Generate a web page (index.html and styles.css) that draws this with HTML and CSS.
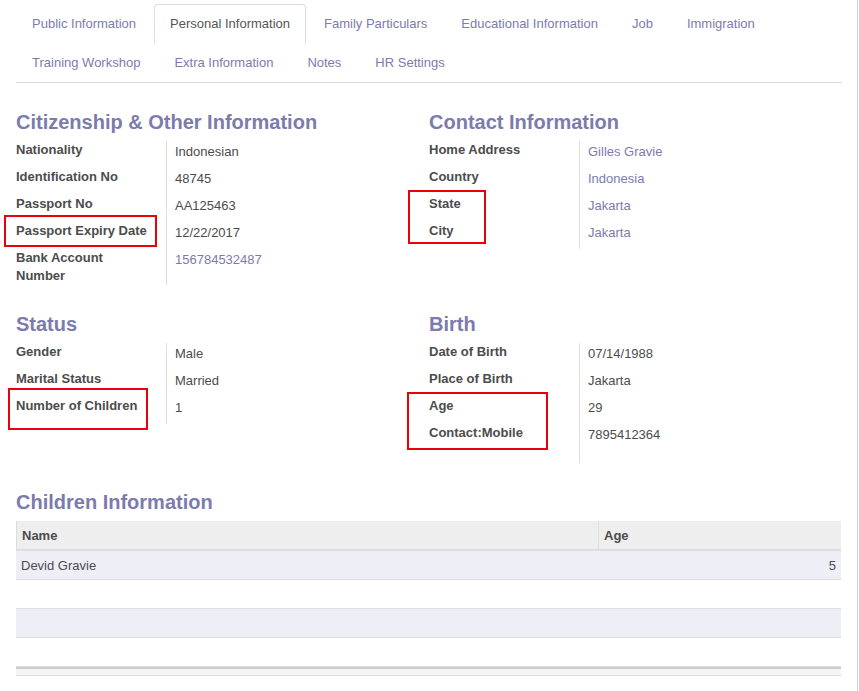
FILE: index.html
```html
<!DOCTYPE html>
<html>
<head>
<meta charset="utf-8">
<link rel="stylesheet" href="styles.css">
</head>
<body>
<div class="sheet">
  <ul class="tabs">
    <li><a>Public Information</a></li>
    <li class="active"><a>Personal Information</a></li>
    <li><a>Family Particulars</a></li>
    <li><a>Educational Information</a></li>
    <li><a>Job</a></li>
    <li><a>Immigration</a></li>
    <li><a>Training Workshop</a></li>
    <li><a>Extra Information</a></li>
    <li><a>Notes</a></li>
    <li><a>HR Settings</a></li>
  </ul>

  <div class="groups">
    <div class="group">
      <h2 class="sep">Citizenship &amp; Other Information</h2>
      <div class="fields">
        <div class="lbl">Nationality</div><div class="val">Indonesian</div>
        <div class="lbl">Identification No</div><div class="val">48745</div>
        <div class="lbl">Passport No</div><div class="val">AA125463</div>
        <div class="lbl">Passport Expiry Date</div><div class="val">12/22/2017</div>
        <div class="lbl">Bank Account Number</div><div class="val link">156784532487</div>
      </div>
    </div>
    <div class="group">
      <h2 class="sep">Contact Information</h2>
      <div class="fields">
        <div class="lbl">Home Address</div><div class="val link">Gilles Gravie</div>
        <div class="lbl">Country</div><div class="val link">Indonesia</div>
        <div class="lbl">State</div><div class="val link">Jakarta</div>
        <div class="lbl">City</div><div class="val link">Jakarta</div>
      </div>
    </div>
    <div class="group">
      <h2 class="sep">Status</h2>
      <div class="fields">
        <div class="lbl">Gender</div><div class="val">Male</div>
        <div class="lbl">Marital Status</div><div class="val">Married</div>
        <div class="lbl">Number of Children</div><div class="val">1</div>
      </div>
    </div>
    <div class="group">
      <h2 class="sep">Birth</h2>
      <div class="fields">
        <div class="lbl">Date of Birth</div><div class="val">07/14/1988</div>
        <div class="lbl">Place of Birth</div><div class="val">Jakarta</div>
        <div class="lbl">Age</div><div class="val">29</div>
        <div class="lbl">Contact:Mobile</div><div class="val tall">7895412364</div>
      </div>
    </div>
  </div>

  <h2 class="sep children">Children Information</h2>
  <table class="list">
    <thead>
      <tr><th class="c-name">Name</th><th class="c-age">Age</th></tr>
    </thead>
    <tbody>
      <tr class="odd"><td>Devid Gravie</td><td class="num">5</td></tr>
      <tr><td></td><td></td></tr>
      <tr class="odd"><td></td><td></td></tr>
      <tr><td></td><td></td></tr>
    </tbody>
    <tfoot>
      <tr><td></td><td></td></tr>
    </tfoot>
  </table>

  <div class="mark mark-passport"></div>
  <div class="mark mark-state"></div>
  <div class="mark mark-children"></div>
  <div class="mark mark-age"></div>
</div>
</body>
</html>
```

FILE: styles.css
```css
* { box-sizing: border-box; }

html, body {
  margin: 0;
  padding: 0;
  background: #fff;
}

body {
  font-family: "Liberation Sans", Arial, sans-serif;
  font-size: 13px;
  color: #4c4c4c;
}

.sheet {
  position: relative;
  width: 858px;
  min-height: 691px;
  padding: 4px 16px 0 16px;
  border-right: 1px solid #d3d3dc;
}

/* Tabs */
.tabs {
  list-style: none;
  margin: 0;
  padding: 0;
  display: flex;
  flex-wrap: wrap;
  border-bottom: 1px solid #ddd;
  margin-right: -1px;
}

.tabs li {
  margin-bottom: -1px;
  margin-right: 2px;
}

.tabs a {
  display: block;
  padding: 10px 15px;
  line-height: 18px;
  border: 1px solid transparent;
  border-radius: 4px 4px 0 0;
  color: #7c7bad;
}

.tabs li.active a {
  color: #555;
  background: #fff;
  border-color: #ddd;
  border-bottom-color: transparent;
}

/* Groups */
.groups {
  margin-top: 27px;
  display: grid;
  grid-template-columns: 413px 1fr;
  row-gap: 27px;
  align-items: start;
}

.sep {
  margin: 0 0 7px 0;
  font-size: 20px;
  line-height: 24px;
  font-weight: bold;
  color: #7c7bad;
}

.fields {
  display: grid;
  grid-template-columns: 151px 1fr;
}

.lbl {
  font-weight: bold;
  line-height: 18px;
  padding-right: 14px;
  border-right: 1px solid #ddd;
  color: #4c4c4c;
}

.val {
  line-height: 18px;
  padding: 2px 0 0 8px;
  min-height: 27px;
  color: #4c4c4c;
}

.val.link {
  color: #7c7bad;
}

.val.tall {
  min-height: 39px;
}

.children {
  margin-top: 27px;
}

/* List table */
.list {
  width: 825px;
  border-collapse: separate;
  border-spacing: 0;
  table-layout: fixed;
}

.list th {
  height: 30px;
  padding: 0 5px;
  text-align: left;
  font-weight: bold;
  background: #eee;
  border-bottom: 2px solid #ddd;
  color: #4c4c4c;
}

.list th.c-name {
  width: 582px;
  border-left: 1px solid #ddd;
}

.list th.c-age {
  border-left: 1px solid #ddd;
}

.list td {
  height: 29px;
  padding: 0 5px;
  border-bottom: 1px solid #ddd;
  color: #4c4c4c;
}

.list tr.odd td {
  background: #eeeef6;
}

.list td.num {
  text-align: right;
}

.list tfoot td {
  height: 9px;
  padding: 0;
  background: #f5f5f5;
  border-top: 2px solid #ccc;
  border-bottom: 1px solid #ddd;
}

/* Annotation boxes */
.mark {
  position: absolute;
  border: 2px solid #e8000b;
}

.mark-passport { left: 4px; top: 215px; width: 153px; height: 32px; }
.mark-state { left: 408px; top: 190px; width: 78px; height: 54px; }
.mark-children { left: 8px; top: 388px; width: 140px; height: 42px; }
.mark-age { left: 407px; top: 392px; width: 141px; height: 58px; }
```
